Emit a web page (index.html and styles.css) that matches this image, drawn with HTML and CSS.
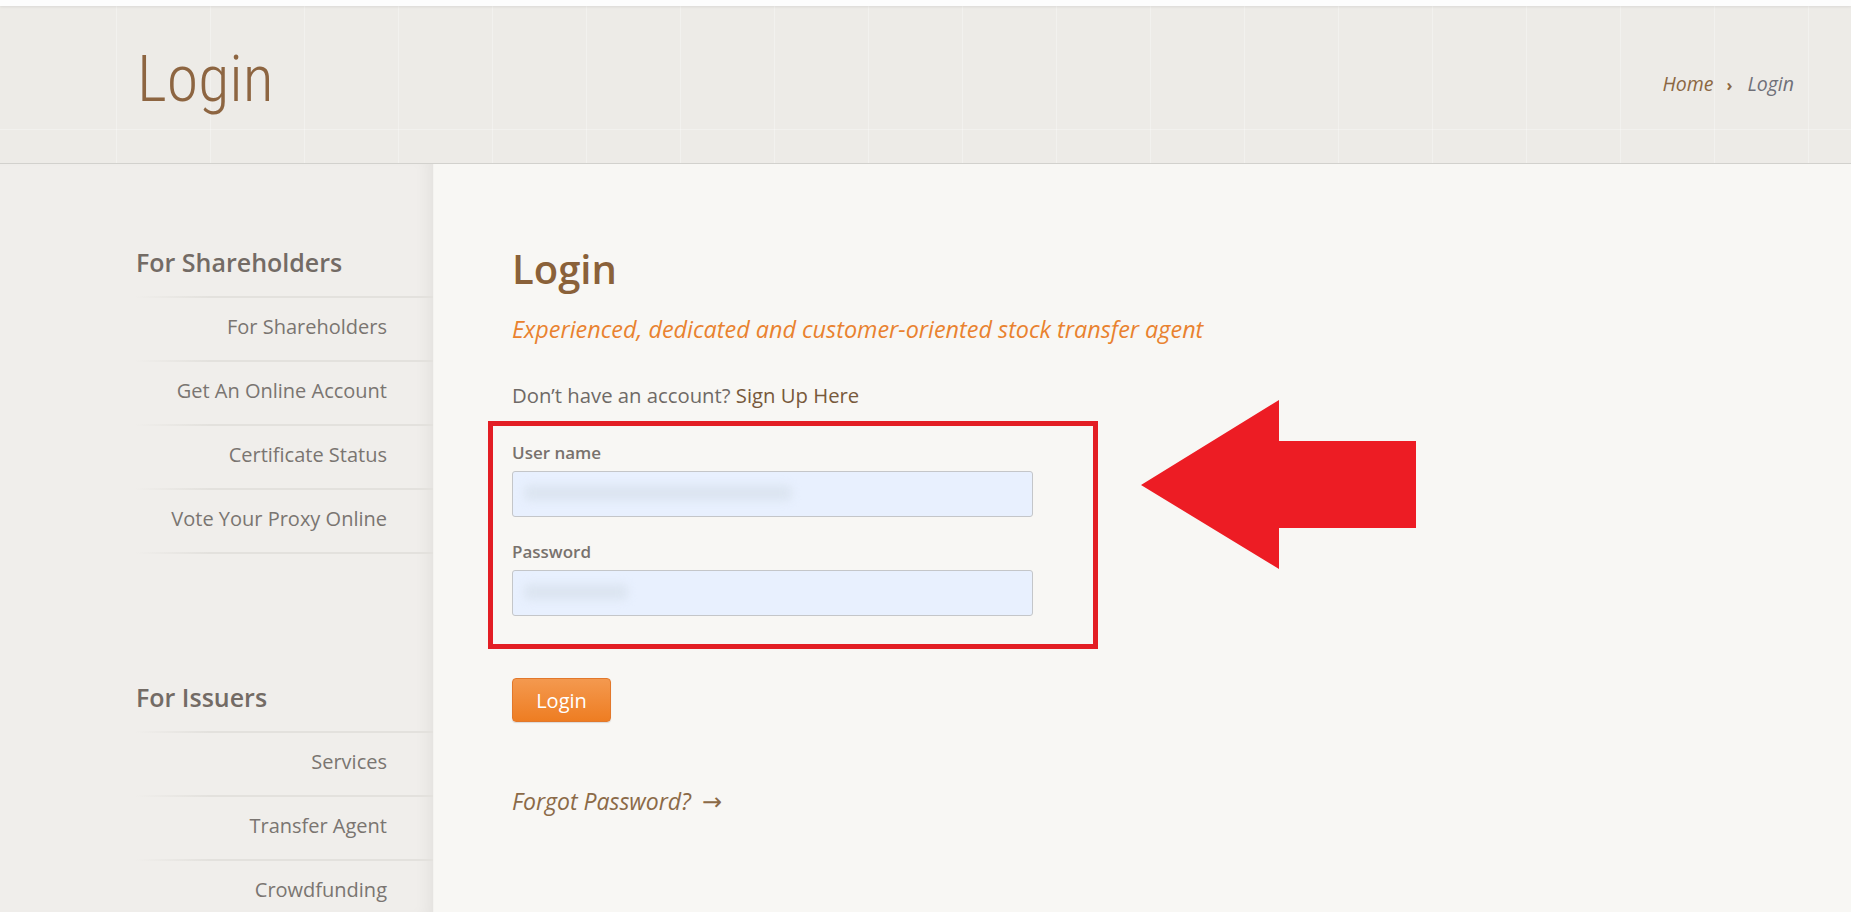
FILE: index.html
```html
<!DOCTYPE html>
<html lang="en">
<head>
<meta charset="utf-8">
<title>Login</title>
<link rel="stylesheet" href="styles.css">
</head>
<body>
<div class="topstrip"></div>
<header class="page-header">
  <h1 class="page-title">Login</h1>
  <nav class="crumbs"><a class="crumb-home" href="#">Home</a><span class="crumb-sep">›</span><span class="crumb-current">Login</span></nav>
</header>
<div class="layout">
  <aside class="sidebar">
    <h3 class="side-title">For Shareholders</h3>
    <ul class="side-menu">
      <li><a href="#">For Shareholders</a></li>
      <li><a href="#">Get An Online Account</a></li>
      <li><a href="#">Certificate Status</a></li>
      <li><a href="#">Vote Your Proxy Online</a></li>
    </ul>
    <h3 class="side-title side-title-2">For Issuers</h3>
    <ul class="side-menu">
      <li><a href="#">Services</a></li>
      <li><a href="#">Transfer Agent</a></li>
      <li><a href="#">Crowdfunding</a></li>
    </ul>
  </aside>
  <main class="content">
    <h2 class="content-title">Login</h2>
    <p class="tagline">Experienced, dedicated and customer-oriented stock transfer agent</p>
    <p class="signup">Don’t have an account? <a href="#">Sign Up Here</a></p>
    <div class="fields">
      <label class="field-label">User name</label>
      <div class="field"><input class="field-input" type="text"><span class="blur blur-user"></span></div>
      <label class="field-label field-label-2">Password</label>
      <div class="field"><input class="field-input" type="password"><span class="blur blur-pass"></span></div>
    </div>
    <button class="btn-login">Login</button>
    <a class="forgot" href="#">Forgot Password? <span class="forgot-arrow">→</span></a>
    <svg class="arrow" width="275" height="169" viewBox="0 0 275 169"><polygon points="0,85 138,0 138,41 275,41 275,128 138,128 138,169" fill="#ed1c24"/></svg>
  </main>
</div>
</body>
</html>
```
FILE: styles.css
```css
* { box-sizing: border-box; }
html, body { margin: 0; padding: 0; }
body {
  font-family: "Open Sans", "Liberation Sans", sans-serif;
  background: #f8f7f4;
  color: #6f6a66;
  height: 912px;
  overflow: hidden;
}
a { text-decoration: none; }
.topstrip {
  height: 6px;
  background: #fdfdfd;
  box-shadow: 0 1px 3px rgba(0,0,0,0.08);
  position: relative;
  z-index: 1;
}
.page-header {
  height: 158px;
  background-color: #edebe7;
  background-image:
    repeating-linear-gradient(to right, rgba(255,255,255,0) 0 93px, rgba(255,255,255,0.3) 93px 94px),
    repeating-linear-gradient(to bottom, rgba(255,255,255,0) 0 93px, rgba(255,255,255,0.3) 93px 94px);
  background-position: 23px 30px, 23px 30px;
  border-bottom: 1px solid #d2d1cd;
  display: flex;
  justify-content: space-between;
  align-items: flex-start;
  padding: 36px 57px 0 137px;
}
.page-title {
  margin: 0;
  font-family: Roboto, "Open Sans", sans-serif;
  font-weight: 300;
  font-stretch: 75%;
  font-size: 64px;
  line-height: 75px;
  color: #8d6541;
}
.crumbs {
  font-style: italic;
  font-size: 19.5px;
  line-height: 26px;
  margin-top: 29px;
  display: flex;
  align-items: baseline;
}
.crumb-home { color: #8b6741; }
.crumb-sep { color: #8b6741; font-style: normal; font-weight: 700; font-size: 16px; margin: 0 15px 0 13px; }
.crumb-current { color: #6f7079; }
.layout {
  display: flex;
  height: 748px;
}
.sidebar {
  width: 434px;
  flex: none;
  background: #f0eeeb;
  box-shadow: inset -14px 0 16px -10px rgba(0,0,0,0.06);
  border-right: 1px solid #f4f3f0;
  padding: 83px 0 0 136px;
}
.side-title {
  margin: 0 0 19px;
  font-size: 25px;
  line-height: 30px;
  font-weight: 600;
  color: #736b65;
}
.side-title-2 { margin-top: 128px; }
.side-menu {
  list-style: none;
  margin: 0;
  padding: 0;
  border-bottom: 2px solid transparent;
  border-image: linear-gradient(to right, rgba(226,224,220,0), #e3e1dd 25%) 1;
}
.side-menu li {
  border-top: 2px solid transparent;
  border-image: linear-gradient(to right, rgba(226,224,220,0), #e3e1dd 25%) 1;
  padding: 17px 46px 21px 0;
  text-align: right;
  font-size: 20px;
  line-height: 24px;
}
.side-menu a { color: #7a7571; }
.content {
  position: relative;
  flex: 1;
  padding: 80px 0 0 78px;
}
.content-title {
  margin: 0;
  font-size: 40px;
  line-height: 50px;
  font-weight: 600;
  color: #8a6139;
}
.tagline {
  margin: 20px 0 0;
  font-size: 23.4px;
  line-height: 30px;
  font-style: italic;
  font-weight: 400;
  color: #e9822f;
}
.signup {
  margin: 38px 0 0;
  font-size: 20.3px;
  line-height: 26px;
  font-weight: 400;
  color: #6f6a66;
}
.signup a { color: #77593b; }
.fields {
  margin: 13px 0 0 -24px;
  width: 610px;
  border: 5px solid #e31e24;
  padding: 16px 19px 28px;
}
.field-label {
  display: block;
  font-size: 17px;
  line-height: 22px;
  font-weight: 600;
  color: #78726d;
}
.field-label-2 { margin-top: 24px; }
.field {
  position: relative;
  margin-top: 7px;
  width: 521px;
  height: 46px;
}
.field-input {
  display: block;
  width: 100%;
  height: 100%;
  border: 1px solid #c4c6c9;
  border-radius: 3px;
  background: #e8f0fe;
  margin: 0;
}
.blur {
  position: absolute;
  top: 14px;
  left: 12px;
  height: 16px;
  background: #dce5f1;
  filter: blur(4px);
  border-radius: 6px;
}
.blur-user { width: 268px; }
.blur-pass { width: 104px; }
.btn-login {
  display: block;
  margin-top: 29px;
  width: 99px;
  height: 44px;
  border: 1px solid #e2782b;
  border-radius: 4px;
  background: linear-gradient(to bottom, #f4994f, #ee7d22);
  color: #ffffff;
  font-family: "Open Sans", sans-serif;
  font-size: 20px;
  padding: 0;
  box-shadow: 0 1px 1px rgba(0,0,0,0.12);
}
.forgot {
  display: inline-block;
  margin-top: 64px;
  font-size: 23px;
  line-height: 30px;
  font-style: italic;
  font-weight: 500;
  color: #8b6a47;
}
.forgot-arrow { font-style: normal; font-size: 24px; font-family: "DejaVu Sans", sans-serif; font-weight: 400; margin-left: 5px; }
.arrow {
  position: absolute;
  left: 707px;
  top: 236px;
}
```
